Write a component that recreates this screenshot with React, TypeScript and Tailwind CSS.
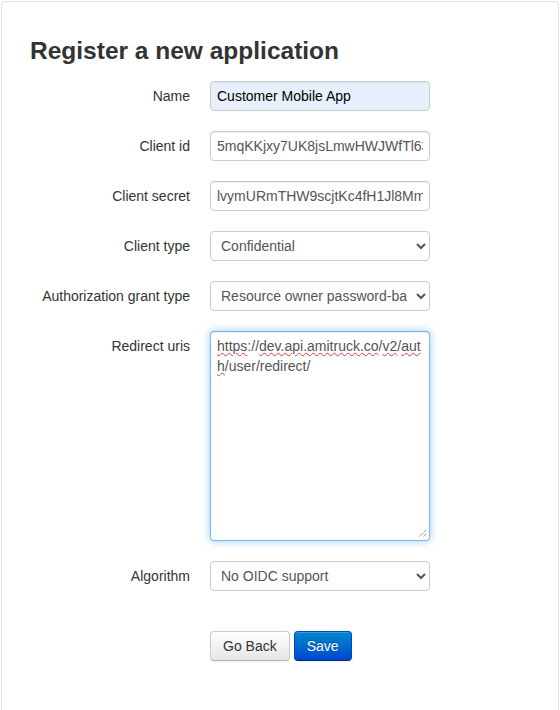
import { ReactNode } from 'react'

const font = { fontFamily: '"Liberation Sans", Arial, Helvetica, sans-serif' }

function Row({ label, children, last }: { label: string; children: ReactNode; last?: boolean }) {
    return (
        <div className={`flex ${last ? '' : 'mb-[20px]'}`}>
            <label className="w-[160px] shrink-0 pt-[5px] text-right text-[14px] leading-[20px] text-[#333]">{label}</label>
            <div className="ml-[20px]">{children}</div>
        </div>
    )
}

const inputCls =
    'block w-[220px] h-[30px] px-[6px] py-[4px] border border-[#ccc] rounded-[4px] text-[14px] leading-[20px] text-[#555] shadow-[inset_0_1px_1px_rgba(0,0,0,0.075)] outline-none'

const selectCls =
    'block w-[220px] h-[30px] px-[6px] border border-[#ccc] rounded-[4px] bg-white text-[14px] text-[#555] outline-none'

// red squiggle like the browser spell checker
function Typo({ children }: { children: ReactNode }) {
    return (
        <span className="underline decoration-wavy decoration-[#e03c3c] decoration-1 underline-offset-[1px]">
            {children}
        </span>
    )
}

export default function App() {
    return (
        <div className="p-px bg-white min-h-[710px]" style={font}>
            <div className="w-[558px] min-h-[730px] border border-[#e3e3e3] rounded-[4px] bg-white px-[28px] pt-[19px]">
                <h3 className="mt-[10px] mb-[10px] text-[24.5px] leading-[40px] font-bold text-[#333]">
                    Register a new application
                </h3>

                <form onSubmit={(e) => e.preventDefault()}>
                    <Row label="Name">
                        <input
                            className={`${inputCls} bg-[#e8f0fe] text-black`}
                            defaultValue="Customer Mobile App"
                        />
                    </Row>
                    <Row label="Client id">
                        <input className={`${inputCls} bg-white`} defaultValue="5mqKKjxy7UK8jsLmwHWJWfTl63nQpR0xYz" />
                    </Row>
                    <Row label="Client secret">
                        <input className={`${inputCls} bg-white`} defaultValue="lvymURmTHW9scjtKc4fH1Jl8MmZ0aQwE" />
                    </Row>
                    <Row label="Client type">
                        <select className={selectCls} defaultValue="confidential">
                            <option value="confidential">Confidential</option>
                            <option value="public">Public</option>
                        </select>
                    </Row>
                    <Row label="Authorization grant type">
                        <select className={selectCls} defaultValue="password">
                            <option value="code">Authorization code</option>
                            <option value="password">Resource owner password-based</option>
                            <option value="client">Client credentials</option>
                        </select>
                    </Row>
                    <Row label="Redirect uris">
                        <div className="relative w-[220px] h-[210px] px-[6px] py-[4px] border border-[rgba(82,168,236,0.8)] rounded-[4px] bg-white text-[14px] leading-[20px] text-[#555] shadow-[inset_0_1px_1px_rgba(0,0,0,0.075),0_0_8px_rgba(82,168,236,0.6)]">
                            <div className="whitespace-nowrap">
                                <Typo>https</Typo>://<Typo>dev.api.amitruck.co</Typo>/<Typo>v2</Typo>/<Typo>aut</Typo>
                            </div>
                            <div className="whitespace-nowrap">
                                <Typo>h</Typo>/user/redirect/
                            </div>
                            <svg className="absolute right-[2px] bottom-[2px]" width="9" height="9" viewBox="0 0 9 9">
                                <path d="M8 1 L1 8 M8 5 L5 8" stroke="#666" strokeWidth="1" strokeDasharray="1 1" />
                            </svg>
                        </div>
                    </Row>
                    <Row label="Algorithm" last>
                        <select className={selectCls} defaultValue="none">
                            <option value="none">No OIDC support</option>
                            <option value="rs256">RSA with SHA-2 256</option>
                            <option value="hs256">HMAC with SHA-2 256</option>
                        </select>
                    </Row>

                    <div className="flex gap-[4px] pl-[180px] pt-[40px]">
                        <button
                            type="button"
                            className="px-[12px] py-[4px] text-[14px] leading-[20px] text-[#333] rounded-[4px] border border-[#ccc] border-b-[#b3b3b3] bg-linear-to-b from-white to-[#e6e6e6] shadow-[inset_0_1px_0_rgba(255,255,255,0.2),0_1px_2px_rgba(0,0,0,0.05)]"
                        >
                            Go Back
                        </button>
                        <button
                            type="submit"
                            className="px-[12px] py-[4px] text-[14px] leading-[20px] text-white rounded-[4px] border border-[#0044cc] border-b-[#002a80] bg-linear-to-b from-[#0088cc] to-[#0044cc] [text-shadow:0_-1px_0_rgba(0,0,0,0.25)] shadow-[inset_0_1px_0_rgba(255,255,255,0.2),0_1px_2px_rgba(0,0,0,0.05)]"
                        >
                            Save
                        </button>
                    </div>
                </form>
            </div>
        </div>
    )
}
